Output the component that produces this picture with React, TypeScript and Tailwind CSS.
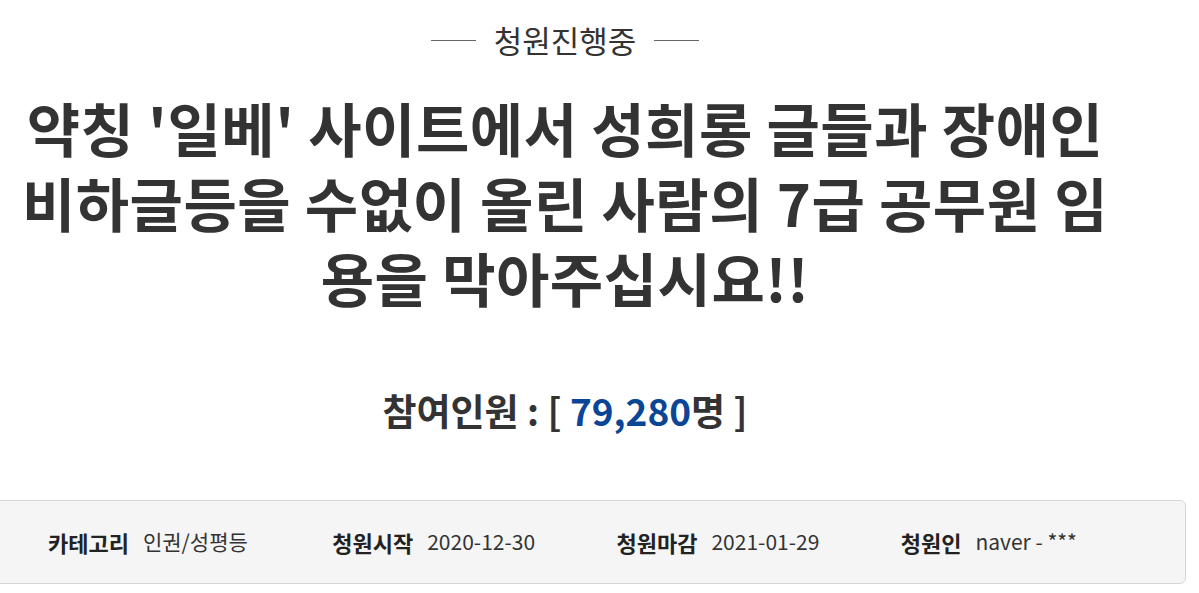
import React from 'react';

const info = [
  { label: '카테고리', value: '인권/성평등' },
  { label: '청원시작', value: '2020-12-30' },
  { label: '청원마감', value: '2021-01-29' },
  { label: '청원인', value: 'naver - ***' },
];

const App: React.FC = () => {
  return (
    <div
      className="w-full min-h-[593px] overflow-hidden bg-white text-[#333]"
      style={{ fontFamily: '"Noto Sans CJK KR", "Noto Sans", sans-serif' }}
    >
      <div className="-ml-[56px] w-[1242px] flex flex-col items-center">
        {/* status header */}
        <div className="mt-[21px] flex items-center gap-[18px]">
          <span className="block w-[45px] h-px bg-[#666]" />
          <span className="text-[31px] leading-[38px] text-[#333]">청원진행중</span>
          <span className="block w-[45px] h-px bg-[#666]" />
        </div>

        {/* title */}
        <h1 className="mt-[31px] text-center text-[58px] font-bold leading-[75px] tracking-[0.5px] text-[#333]">
          약칭 '일베' 사이트에서 성희롱 글들과 장애인
          <br />
          비하글등을 수없이 올린 사람의 7급 공무원 임
          <br />
          용을 막아주십시요!!
        </h1>

        {/* participants */}
        <p className="mt-[70px] text-[37px] font-bold leading-[50px] text-[#333]">
          참여인원 : [ <span className="text-[#0b4596]">79,280</span>명 ]
        </p>

        {/* info box */}
        <div className="mt-[65px] w-full h-[84px] flex items-center pl-[103px] bg-[#f5f5f5] border border-[#d5d5d5] rounded-[6px]">
          {info.map((item) => (
            <div key={item.label} className="w-[287px] flex items-center gap-[14px]">
              <span className="text-[22px] font-bold text-[#222]">{item.label}</span>
              <span className="text-[21px] text-[#333]">{item.value}</span>
            </div>
          ))}
        </div>
      </div>
    </div>
  );
};

export default App;
